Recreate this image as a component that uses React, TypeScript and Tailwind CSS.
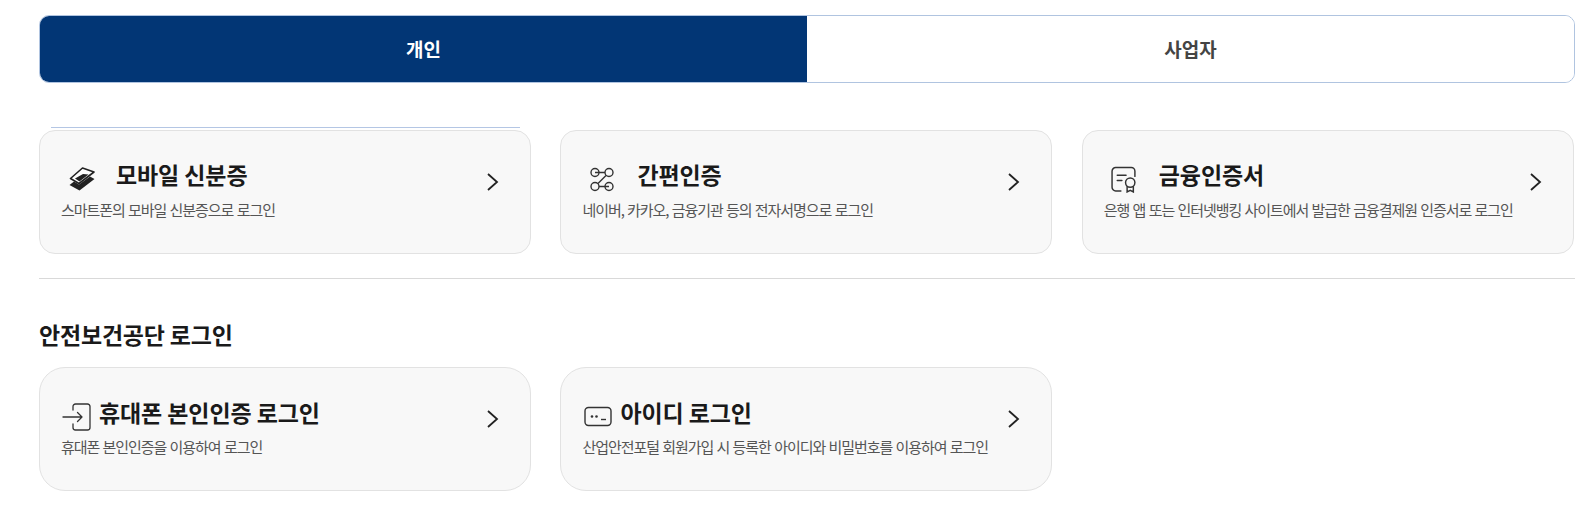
const font = "font-['Noto_Sans_CJK_KR','Noto_Sans',sans-serif]";

function IdIcon() {
  return (
    <svg width="26" height="24" viewBox="0 0 26 24" fill="none" className="ml-[2px]">
      <path d="M0.5 18 L5 14.5 L10 17.5 L21 9.5 L25.5 12 L10.5 23.5 Z" fill="#222" />
      <path d="M1.5 11.5 L13.5 1 L25 5 L10 16.5 Z" fill="#fff" stroke="#222" strokeWidth="1.6" strokeLinejoin="round" />
      <path d="M6 11.5 L14 7 L19.5 7.5 L10.5 14.5 Z" fill="#222" />
    </svg>
  );
}

function LinkIcon() {
  return (
    <svg width="26" height="26" viewBox="0 0 26 26" fill="none" stroke="#333" strokeWidth="1.4">
      <circle cx="6" cy="6.5" r="4" />
      <circle cx="20" cy="6.5" r="4" />
      <circle cx="6" cy="20.5" r="4" />
      <circle cx="20" cy="20.5" r="4" />
      <path d="M6 6.5H16M9 17.5L17 9.5M10 20.5H20" />
    </svg>
  );
}

function CertIcon() {
  return (
    <svg width="28" height="27" viewBox="0 0 26 26" fill="none" stroke="#333" strokeWidth="1.4" strokeLinecap="round">
      <path d="M10 24H5a3.5 3.5 0 0 1-3.5-3.5V5A3.5 3.5 0 0 1 5 1.5h15A3.5 3.5 0 0 1 23.5 5v5" />
      <path d="M6.5 9H15M6.5 14H11" />
      <circle cx="19" cy="16" r="4.5" />
      <path d="M16 20v5l3-1.5 3 1.5v-5" />
    </svg>
  );
}

function EnterIcon() {
  return (
    <svg width="30" height="28" viewBox="0 0 30 28" fill="none" stroke="#333" strokeWidth="1.3" strokeLinecap="round" strokeLinejoin="round">
      <path d="M11 7V3.5A2.5 2.5 0 0 1 13.5 1h12A2.5 2.5 0 0 1 28 3.5v21a2.5 2.5 0 0 1-2.5 2.5h-12a2.5 2.5 0 0 1-2.5-2.5V21" />
      <path d="M1 14H20M15.5 9.5L20 14l-4.5 4.5" />
    </svg>
  );
}

function PwIcon() {
  return (
    <svg width="28" height="21" viewBox="0 0 28 21" fill="none" stroke="#333" strokeWidth="1.4">
      <rect x="1" y="1.5" width="26" height="18" rx="3.5" />
      <circle cx="8" cy="10.5" r="1.3" fill="#333" stroke="none" />
      <circle cx="12.5" cy="10.5" r="1.3" fill="#333" stroke="none" />
      <path d="M17 13.5H22" />
    </svg>
  );
}

function Chevron() {
  return (
    <svg width="14" height="20" viewBox="0 0 14 20" fill="none" stroke="#222" strokeWidth="1.8" className="shrink-0">
      <path d="M2 2l9 8-9 8" />
    </svg>
  );
}

function LoginCard({
  icon,
  title,
  desc,
  small,
}: {
  icon: React.ReactNode;
  title: string;
  desc: string;
  small?: boolean;
}) {
  return (
    <div
      className={
        small
          ? "h-[124px] border border-[#e2e2e2] bg-[#f8f8f8] pl-[21px] pr-[30px] pt-[27px] flex items-start justify-between rounded-[26px]"
          : "h-[124px] border border-[#e2e2e2] bg-[#f8f8f8] pl-[21px] pr-[30px] pt-[26px] flex items-start justify-between rounded-[16px]"
      }
    >
      <div className="min-w-0">
        <div className={small ? "flex items-center h-[34px] gap-[6px]" : "flex items-center h-[34px] gap-[15px]"}>
          <div className={small ? "flex justify-center shrink-0 w-[32px] pt-[9px]" : "flex justify-center shrink-0 w-[40px] pt-[10px]"}>
            {icon}
          </div>
          <span className="text-[23px] leading-[34px] font-bold tracking-[-0.1px] text-[#1a1a1a] whitespace-nowrap">{title}</span>
        </div>
        <p className={small ? "mt-[8px] text-[15px] leading-[20px] tracking-[-1.05px] [word-spacing:1px] text-[#555] whitespace-nowrap" : "mt-[9px] text-[15px] leading-[20px] tracking-[-1.05px] [word-spacing:1px] text-[#555] whitespace-nowrap"}>
          {desc}
        </p>
      </div>
      <div className={small ? "mt-[14px]" : "mt-[15px]"}>
        <Chevron />
      </div>
    </div>
  );
}

export default function App() {
  return (
    <div className={`${font} bg-white h-[519px] overflow-hidden pt-[15px] pl-[39px] pr-[14px]`}>
      <div className="grid grid-cols-2 h-[68px] rounded-[10px] overflow-hidden border border-[#b0c4e0]">
        <div className="bg-[#023675] -m-px flex items-center justify-center text-white text-[19px] font-bold">개인</div>
        <div className="bg-white flex items-center justify-center text-[#444] text-[19px] font-bold">사업자</div>
      </div>

      <div className="mt-[44px] ml-[12px] w-[469px] h-px bg-[#b4c6e4]" />

      <div className="grid grid-cols-[repeat(3,492px)] gap-[29.4px] mt-[2px]">
        <LoginCard icon={<IdIcon />} title="모바일 신분증" desc="스마트폰의 모바일 신분증으로 로그인" />
        <LoginCard icon={<LinkIcon />} title="간편인증" desc="네이버, 카카오, 금융기관 등의 전자서명으로 로그인" />
        <LoginCard icon={<CertIcon />} title="금융인증서" desc="은행 앱 또는 인터넷뱅킹 사이트에서 발급한 금융결제원 인증서로 로그인" />
      </div>

      <div className="mt-[24px] h-px bg-[#d9d9d9]" />

      <h2 className="mt-[38px] text-[23px] leading-[34px] font-bold tracking-[-0.2px] text-[#1a1a1a]">안전보건공단 로그인</h2>

      <div className="grid grid-cols-[repeat(3,492px)] gap-[29.4px] mt-[16px]">
        <LoginCard small icon={<EnterIcon />} title="휴대폰 본인인증 로그인" desc="휴대폰 본인인증을 이용하여 로그인" />
        <LoginCard small icon={<PwIcon />} title="아이디 로그인" desc="산업안전포털 회원가입 시 등록한 아이디와 비밀번호를 이용하여 로그인" />
      </div>
    </div>
  );
}
